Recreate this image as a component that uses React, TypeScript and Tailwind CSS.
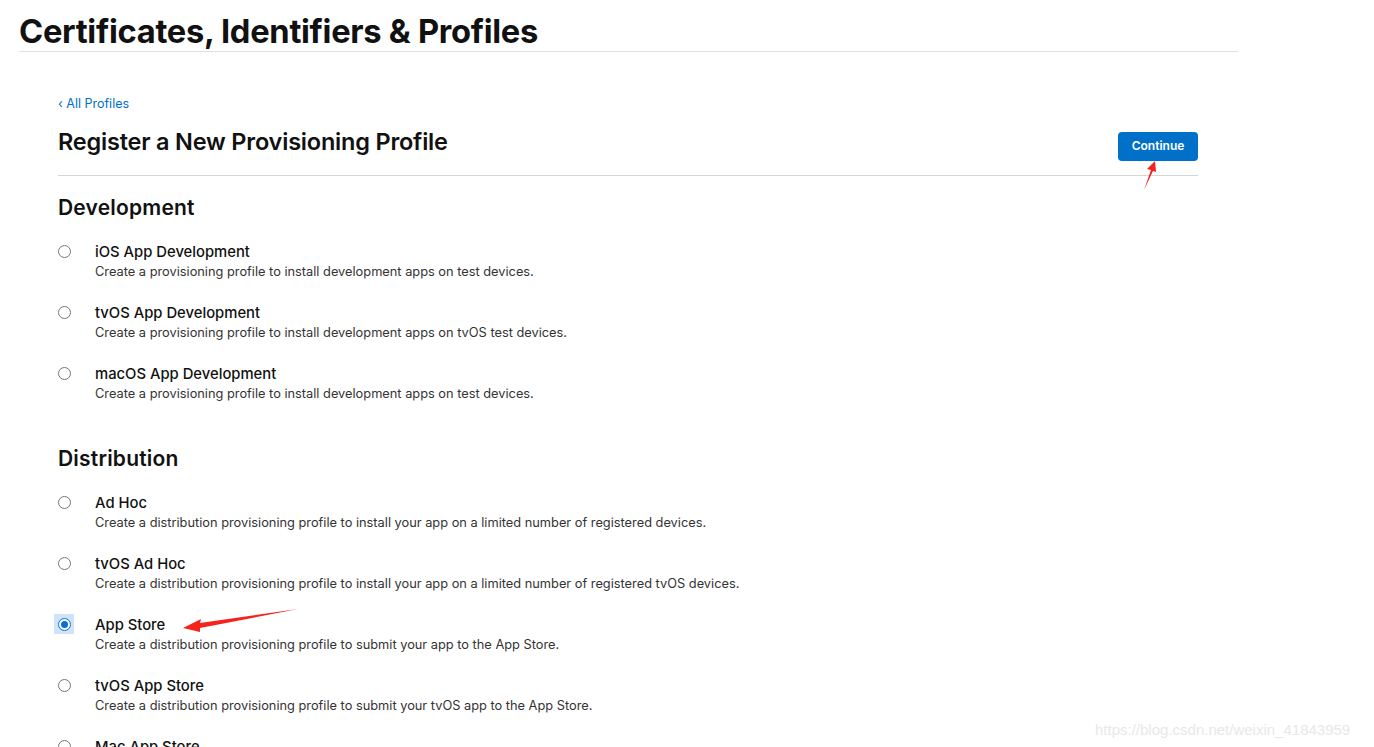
import { useState } from 'react'

const development = [
  { title: 'iOS App Development', desc: 'Create a provisioning profile to install development apps on test devices.' },
  { title: 'tvOS App Development', desc: 'Create a provisioning profile to install development apps on tvOS test devices.' },
  { title: 'macOS App Development', desc: 'Create a provisioning profile to install development apps on test devices.' },
]

const distribution = [
  { title: 'Ad Hoc', desc: 'Create a distribution provisioning profile to install your app on a limited number of registered devices.' },
  { title: 'tvOS Ad Hoc', desc: 'Create a distribution provisioning profile to install your app on a limited number of registered tvOS devices.' },
  { title: 'App Store', desc: 'Create a distribution provisioning profile to submit your app to the App Store.' },
  { title: 'tvOS App Store', desc: 'Create a distribution provisioning profile to submit your tvOS app to the App Store.' },
  { title: 'Mac App Store', desc: 'Create a distribution provisioning profile to submit your app to the Mac App Store.' },
]

function Radio({ checked }: { checked: boolean }) {
  return (
    <div className={`w-[20px] h-[20px] flex items-center justify-center ${checked ? 'bg-[#cfe3fb]' : ''}`}>
      {checked ? (
        <div className="w-[13px] h-[13px] rounded-full border border-[#0a6cdf] bg-white flex items-center justify-center">
          <div className="w-[7px] h-[7px] rounded-full bg-[#0a6cdf]" />
        </div>
      ) : (
        <div className="w-[13px] h-[13px] rounded-full border border-[#767676] bg-white" />
      )}
    </div>
  )
}

function Option({ title, desc, checked, onClick }: { title: string; desc: string; checked: boolean; onClick: () => void }) {
  return (
    <div className="flex h-[61px] cursor-pointer" onClick={onClick}>
      <div className="w-[41px] -mt-[2px] -ml-[4px] shrink-0">
        <Radio checked={checked} />
      </div>
      <div>
        <div className="text-[14.8px] leading-[19px] font-medium text-[#111]">{title}</div>
        <div className="text-[12.8px] leading-[19px] text-[#333]">{desc}</div>
      </div>
    </div>
  )
}

export default function App() {
  const [selected, setSelected] = useState('App Store')

  return (
    <div className="relative w-[1374px] h-[747px] overflow-hidden bg-white font-['Inter',sans-serif]">
      {/* page header */}
      <div className="ml-[19px] w-[1219px] border-b border-[#e0e0e0] pt-[12px] pb-[1px]">
        <h1 className="text-[32.7px] leading-[38px] font-bold text-[#111] tracking-[-0.3px]">
          Certificates, Identifiers &amp; Profiles
        </h1>
      </div>

      <div className="ml-[58px] w-[1140px]">
        <div className="pt-[44px] text-[12.5px] leading-[16px] text-[#0070c9]">‹ All Profiles</div>

        <div className="flex justify-between items-start border-b border-[#d6d6d6] pb-[14px] mt-[15px]">
          <h2 className="text-[23.5px] leading-[30px] font-semibold text-[#111] tracking-[-0.2px]">
            Register a New Provisioning Profile
          </h2>
          <button className="mt-[5px] w-[80px] h-[29px] pb-[2px] rounded-[4px] bg-[#0070c9] text-white text-[12px] font-semibold">
            Continue
          </button>
        </div>

        <h3 className="mt-[19px] text-[21px] leading-[26px] font-semibold text-[#111] tracking-[0.2px]">Development</h3>
        <div className="mt-[22px]">
          {development.map((o) => (
            <Option key={o.title} {...o} checked={selected === o.title} onClick={() => setSelected(o.title)} />
          ))}
        </div>

        <h3 className="mt-[20px] text-[21px] leading-[26px] font-semibold text-[#111] tracking-[0.2px]">Distribution</h3>
        <div className="mt-[22px]">
          {distribution.map((o) => (
            <Option key={o.title} {...o} checked={selected === o.title} onClick={() => setSelected(o.title)} />
          ))}
        </div>
      </div>

      {/* red annotation arrows */}
      <svg className="absolute left-0 top-0 pointer-events-none" width="1374" height="747">
        <path d="M1144 190 L1151 170 L1147 169 L1155 161 L1156 172 L1153 171 Z" fill="#f5231c" />
        <path d="M298 609 L200 623 L201 619 L183 628 L200 632 L200 628 Z" fill="#f5231c" />
      </svg>

      <div className="absolute left-[1095px] top-[719px] text-[15px] text-[#e8e8e8] font-['Liberation_Sans',sans-serif]">
        https://blog.csdn.net/weixin_41843959
      </div>
    </div>
  )
}
